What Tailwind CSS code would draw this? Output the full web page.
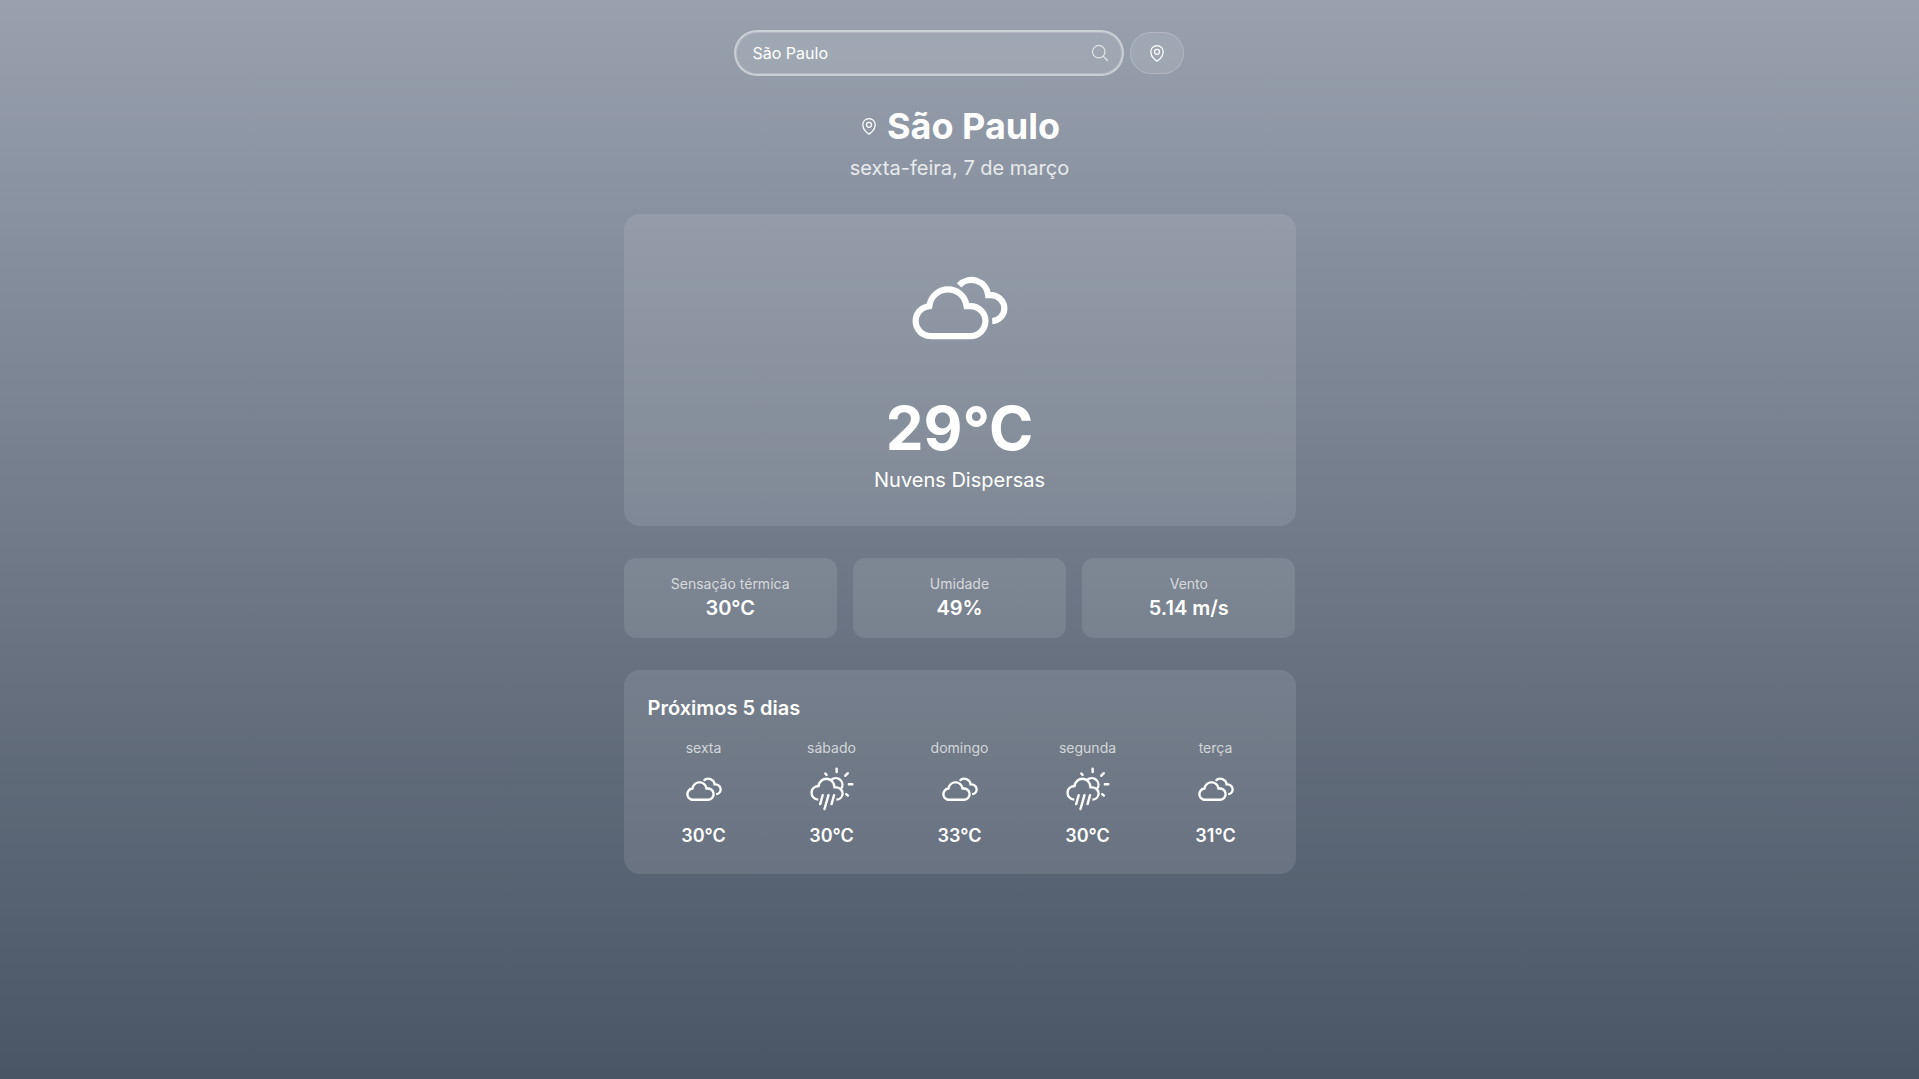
<!DOCTYPE html>
<html lang="pt-BR">
<head>
<meta charset="utf-8">
<meta name="viewport" content="width=device-width, initial-scale=1">
<title>Clima em São Paulo</title>
<script src="https://cdn.jsdelivr.net/npm/@tailwindcss/browser@4"></script>
</head>
<body class="font-['Inter',sans-serif] text-white antialiased">
<svg class="hidden" aria-hidden="true">
  <symbol id="pin" viewBox="0 0 24 24">
    <g fill="none" stroke="currentColor" stroke-width="1.5" stroke-linecap="round" stroke-linejoin="round">
      <path d="M15 10.5a3 3 0 1 1-6 0 3 3 0 0 1 6 0Z"/>
      <path d="M19.5 10.5c0 7.142-7.5 11.25-7.5 11.25S4.5 17.642 4.5 10.5a7.5 7.5 0 1 1 15 0Z"/>
    </g>
  </symbol>
  <symbol id="clouds" viewBox="0 0 30 30">
    <path fill="currentColor" d="M3.89,17.6c0-0.99,0.31-1.88,0.93-2.65s1.41-1.27,2.38-1.49c0.26-1.17,0.85-2.14,1.78-2.88c0.93-0.75,2-1.12,3.22-1.12c1.18,0,2.24,0.36,3.16,1.09c0.93,0.73,1.53,1.66,1.8,2.8h0.27c1.18,0,2.18,0.41,3.01,1.24s1.25,1.83,1.25,3c0,1.18-0.42,2.18-1.25,3.01s-1.83,1.25-3.01,1.25H8.16c-0.58,0-1.13-0.11-1.65-0.34S5.52,21,5.14,20.62c-0.38-0.38-0.68-0.84-0.91-1.36S3.89,18.17,3.89,17.6zM5.34,17.6c0,0.76,0.28,1.42,0.82,1.96s1.21,0.82,1.99,0.82h9.28c0.77,0,1.44-0.27,1.99-0.82c0.55-0.55,0.83-1.2,0.83-1.96c0-0.76-0.27-1.42-0.83-1.96c-0.55-0.54-1.21-0.82-1.99-0.82h-1.39c-0.1,0-0.15-0.05-0.15-0.15l-0.07-0.49c-0.1-0.94-0.5-1.73-1.19-2.35s-1.51-0.93-2.45-0.93c-0.94,0-1.76,0.31-2.46,0.94c-0.7,0.62-1.09,1.41-1.18,2.34l-0.07,0.42c0,0.1-0.05,0.15-0.16,0.15l-0.45,0.07c-0.72,0.06-1.32,0.36-1.81,0.89C5.59,16.24,5.34,16.87,5.34,17.6z"/>
    <path fill="none" stroke="currentColor" stroke-width="1.45" d="M14.8 9.2A3.95 3.95 0 0 1 21.6 11.5h.6A3.15 3.15 0 0 1 25.4 14.65 3 3 0 0 1 22.55 17.6"/>
  </symbol>
  <symbol id="sunrain" viewBox="0 0 30 30">
    <g fill="none" stroke="currentColor" stroke-width="1.5" stroke-linecap="round">
      <path stroke-linecap="butt" d="M6.4 21A4.2 4.2 0 0 1 2.24 16.64C2.24 14.4 3.9 12.7 6.6 12.5 6.9 9.9 9 7.95 11.5 7.95s4.6 1.95 4.95 4.65l.1.75h1.3a4 4 0 0 1 3.8 4A4 4 0 0 1 17.7 21"/>
      <path stroke-linecap="butt" d="M14.6 8.6A4.2 4.2 0 0 1 20.7 14.3"/>
      <path d="M17.9 1.7v2.1M23.2 6.1l1.7-1.6M25.5 11.4h2.2M23.9 17.6l1 .9M10.8 4.7l.8.8M9.2 18.2l-1.6 5.6M12.8 18.2l-2.5 8.7M16.3 18.2l-1.6 5.6"/>
    </g>
  </symbol>
</svg>
<main class="min-h-screen bg-linear-to-b from-gray-400 to-gray-600 px-4 py-8">
  <div class="mx-auto flex max-w-2xl flex-col gap-8">
    <form class="mx-auto flex w-full max-w-md gap-2">
      <div class="relative grow">
        <input type="text" value="São Paulo" aria-label="Cidade" class="block h-[42px] w-full rounded-[21px] border border-white/20 bg-white/10 pr-10 pl-4 text-base text-white ring-2 ring-white/50 outline-none">
        <button type="button" aria-label="Buscar" class="absolute inset-y-0 right-3 flex items-center text-white/70">
          <svg class="size-5" viewBox="0 0 24 24" fill="none" stroke="currentColor" stroke-width="1.5" stroke-linecap="round" stroke-linejoin="round"><path d="m21 21-5.197-5.197m0 0A7.5 7.5 0 1 0 5.196 5.196a7.5 7.5 0 0 0 10.607 10.607Z"/></svg>
        </button>
      </div>
      <button type="button" aria-label="Usar minha localização" class="flex items-center rounded-[21px] border border-white/20 bg-white/10 px-4"><svg class="size-5"><use href="#pin"/></svg></button>
    </form>

    <header class="flex flex-col items-center gap-2">
      <div class="flex items-center gap-2">
        <svg class="size-5" aria-hidden="true"><use href="#pin"/></svg>
        <h1 class="text-4xl font-bold">São Paulo</h1>
      </div>
      <p class="text-xl text-white/80">sexta-feira, 7 de março</p>
    </header>

    <section class="flex flex-col items-center rounded-2xl bg-white/10 p-8">
      <svg class="size-32" role="img" aria-label="Nuvens"><use href="#clouds"/></svg>
      <p class="mt-6 text-6xl font-bold">29°C</p>
      <p class="mt-2 text-xl">Nuvens Dispersas</p>
    </section>

    <dl class="grid grid-cols-3 gap-4 text-center">
      <div class="rounded-xl bg-white/10 p-4"><dt class="text-sm text-white/70">Sensação térmica</dt><dd class="text-xl font-semibold">30°C</dd></div>
      <div class="rounded-xl bg-white/10 p-4"><dt class="text-sm text-white/70">Umidade</dt><dd class="text-xl font-semibold">49%</dd></div>
      <div class="rounded-xl bg-white/10 p-4"><dt class="text-sm text-white/70">Vento</dt><dd class="text-xl font-semibold">5.14 m/s</dd></div>
    </dl>

    <section class="rounded-2xl bg-white/10 p-6">
      <h2 class="mb-4 text-xl font-semibold">Próximos 5 dias</h2>
      <ul class="grid grid-cols-5 gap-4">
        <li class="flex flex-col items-center gap-2"><span class="text-sm text-white/70">sexta</span><svg class="size-12"><use href="#clouds"/></svg><span class="text-lg font-semibold">30°C</span></li>
        <li class="flex flex-col items-center gap-2"><span class="text-sm text-white/70">sábado</span><svg class="size-12"><use href="#sunrain"/></svg><span class="text-lg font-semibold">30°C</span></li>
        <li class="flex flex-col items-center gap-2"><span class="text-sm text-white/70">domingo</span><svg class="size-12"><use href="#clouds"/></svg><span class="text-lg font-semibold">33°C</span></li>
        <li class="flex flex-col items-center gap-2"><span class="text-sm text-white/70">segunda</span><svg class="size-12"><use href="#sunrain"/></svg><span class="text-lg font-semibold">30°C</span></li>
        <li class="flex flex-col items-center gap-2"><span class="text-sm text-white/70">terça</span><svg class="size-12"><use href="#clouds"/></svg><span class="text-lg font-semibold">31°C</span></li>
      </ul>
    </section>
  </div>
</main>
</body>
</html>
